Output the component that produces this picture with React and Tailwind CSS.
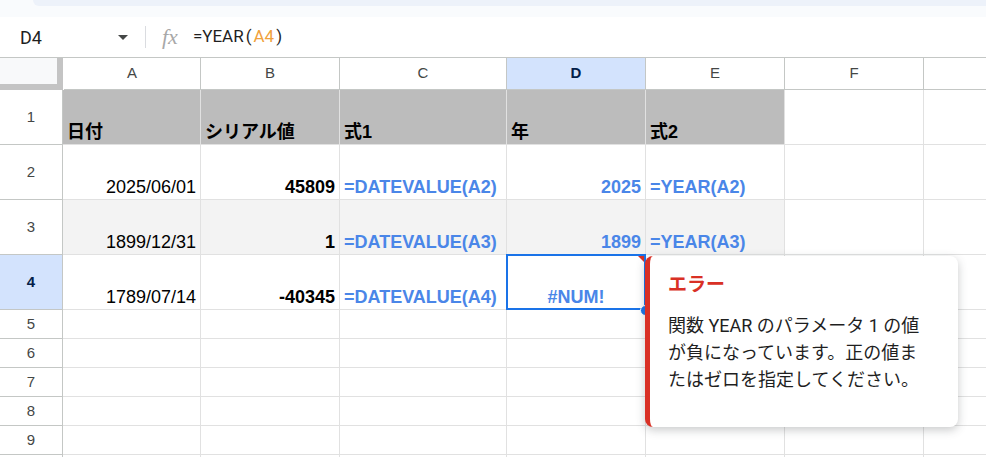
import React from "react";

const colW = ["w-[138px]", "w-[139px]", "w-[167px]", "w-[139px]", "w-[139px]", "w-[139px]"];
const letters = ["A", "B", "C", "D", "E", "F"];

const blue = "text-[#4a86e8] font-bold";

const rows = [
  {
    n: 1,
    h: "h-[55px]",
    bg: "bg-[#bcbcbc]",
    cells: [
      { t: "日付", cls: "font-bold text-black" },
      { t: "シリアル値", cls: "font-bold text-black" },
      { t: "式1", cls: "font-bold text-black" },
      { t: "年", cls: "font-bold text-black" },
      { t: "式2", cls: "font-bold text-black" },
    ],
  },
  {
    n: 2,
    h: "h-[55px]",
    bg: "",
    cells: [
      { t: "2025/06/01", right: true },
      { t: "45809", right: true, cls: "font-bold" },
      { t: "=DATEVALUE(A2)", cls: blue },
      { t: "2025", right: true, cls: blue },
      { t: "=YEAR(A2)", cls: blue },
    ],
  },
  {
    n: 3,
    h: "h-[55px]",
    bg: "bg-[#f3f3f3]",
    cells: [
      { t: "1899/12/31", right: true },
      { t: "1", right: true, cls: "font-bold" },
      { t: "=DATEVALUE(A3)", cls: blue },
      { t: "1899", right: true, cls: blue },
      { t: "=YEAR(A3)", cls: blue },
    ],
  },
  {
    n: 4,
    h: "h-[55px]",
    bg: "",
    active: true,
    cells: [
      { t: "1789/07/14", right: true },
      { t: "-40345", right: true, cls: "font-bold" },
      { t: "=DATEVALUE(A4)", cls: blue },
      { t: "#NUM!", center: true, cls: blue, error: true },
      { t: "" },
    ],
  },
  ...[5, 6, 7, 8, 9].map((n) => ({ n, h: "h-[29px]", bg: "", cells: [] })),
  // row 10 is only a sliver at the bottom edge
  { n: "", h: "h-[29px]", bg: "", cells: [] },
];

function Cell({ w, cell, bg }) {
  const align = cell?.right ? "justify-end" : cell?.center ? "justify-center" : "justify-start";
  return (
    <div
      className={`relative ${w} shrink-0 h-full flex items-end ${align} px-[4px] pb-px border-r border-b border-[#e1e1e1] ${bg} overflow-visible whitespace-nowrap`}
    >
      {cell?.error && (
        <div className="absolute top-0 right-0 w-0 h-0 border-t-[8px] border-l-[8px] border-t-[#d93025] border-l-transparent" />
      )}
      <span className={`text-[18px] leading-[21px] ${cell?.cls || "text-black"}`}>{cell?.t}</span>
    </div>
  );
}

export default function App() {
  return (
    <div
      className="relative w-[986px] h-[457px] overflow-hidden bg-white"
      style={{ fontFamily: '"Liberation Sans", Arial, "Noto Sans CJK JP", sans-serif' }}
    >
      {/* toolbar bottom */}
      <div className="h-[17px] bg-[#f9fbfd]">
        <div className="ml-[33px] h-[6px] bg-[#edf2fa] rounded-bl-[10px]" />
      </div>

      {/* formula bar */}
      <div className="h-[40px] flex items-center">
        <div className="w-[110px] pl-[20px] text-[18px] text-[#1f1f1f]" style={{ fontFamily: "Roboto, sans-serif" }}>
          D4
        </div>
        <div className="w-0 h-0 border-l-[5px] border-r-[5px] border-t-[5px] border-l-transparent border-r-transparent border-t-[#444746] ml-[8px]" />
        <div className="ml-[17px] w-px h-[22px] bg-[#dadce0]" />
        <div
          className="ml-[16px] text-[22px] italic text-[#a8a8a8] leading-none"
          style={{ fontFamily: '"Liberation Serif", serif' }}
        >
          fx
        </div>
        <div className="ml-[15px] text-[17px] text-[#1f1f1f]" style={{ fontFamily: "Roboto, sans-serif" }}>
          =YEAR<span className="ml-[2px]">(</span>
          <span className="mx-[2px] text-[#f0a23c]">A4</span>)
        </div>
      </div>

      {/* column headers */}
      <div className="flex h-[33px] border-t border-[#c4c7c5]">
        <div className="w-[63px] shrink-0 h-full bg-[#f8f9fa] border-r-[6px] border-b-[6px] border-[#c4c4c4] mr-px" />
        {letters.map((l, i) => (
          <div
            key={l}
            className={`${i === 0 ? "w-[137px]" : colW[i]} shrink-0 h-full flex items-center justify-center border-r border-b border-[#c4c7c5] text-[15px] ${
              l === "D" ? "bg-[#d3e3fd] font-bold text-[#041e49]" : "text-[#444746]"
            }`}
          >
            {l}
          </div>
        ))}
        <div className="flex-1 h-full border-b border-[#c4c7c5]" />
      </div>

      {/* rows */}
      {rows.map((r, idx) => (
        <div key={idx} className={`flex ${r.h}`}>
          <div
            className={`w-[63px] shrink-0 h-full flex items-center justify-center border-r border-b border-[#c4c7c5] text-[15px] ${
              r.active ? "bg-[#d3e3fd] font-bold text-[#041e49]" : "text-[#444746]"
            }`}
          >
            {r.n}
          </div>
          {colW.map((w, i) => (
            <Cell key={i} w={w} cell={r.cells[i]} bg={i < 5 ? r.bg : ""} />
          ))}
          <div className="flex-1 h-full border-b border-[#e1e1e1]" />
        </div>
      ))}

      {/* selection on D4 */}
      <div className="absolute left-[506px] top-[254px] w-[140px] h-[56px] border-2 border-[#1a73e8] pointer-events-none" />
      <div className="absolute left-[640px] top-[305px] w-[11px] h-[11px] rounded-full bg-[#1a73e8] border border-white" />

      {/* error tooltip */}
      <div
        className="absolute left-[645px] top-[256px] w-[313px] h-[171px] bg-white rounded-[8px] border-l-[5px] border-[#d93025] shadow-[0_3px_10px_rgba(60,64,67,0.28)] pl-[18px] pt-[16px]"
        style={{ fontFamily: 'Roboto, "Noto Sans CJK JP", sans-serif' }}
      >
        <div className="text-[19px] leading-[26px] font-bold text-[#d93025]">エラー</div>
        <div className="mt-[14px] text-[18px] leading-[27px] text-[#1f1f1f] whitespace-nowrap">
          <div>関数 YEAR のパラメータ 1 の値</div>
          <div>が負になっています。正の値ま</div>
          <div>たはゼロを指定してください。</div>
        </div>
      </div>
    </div>
  );
}
